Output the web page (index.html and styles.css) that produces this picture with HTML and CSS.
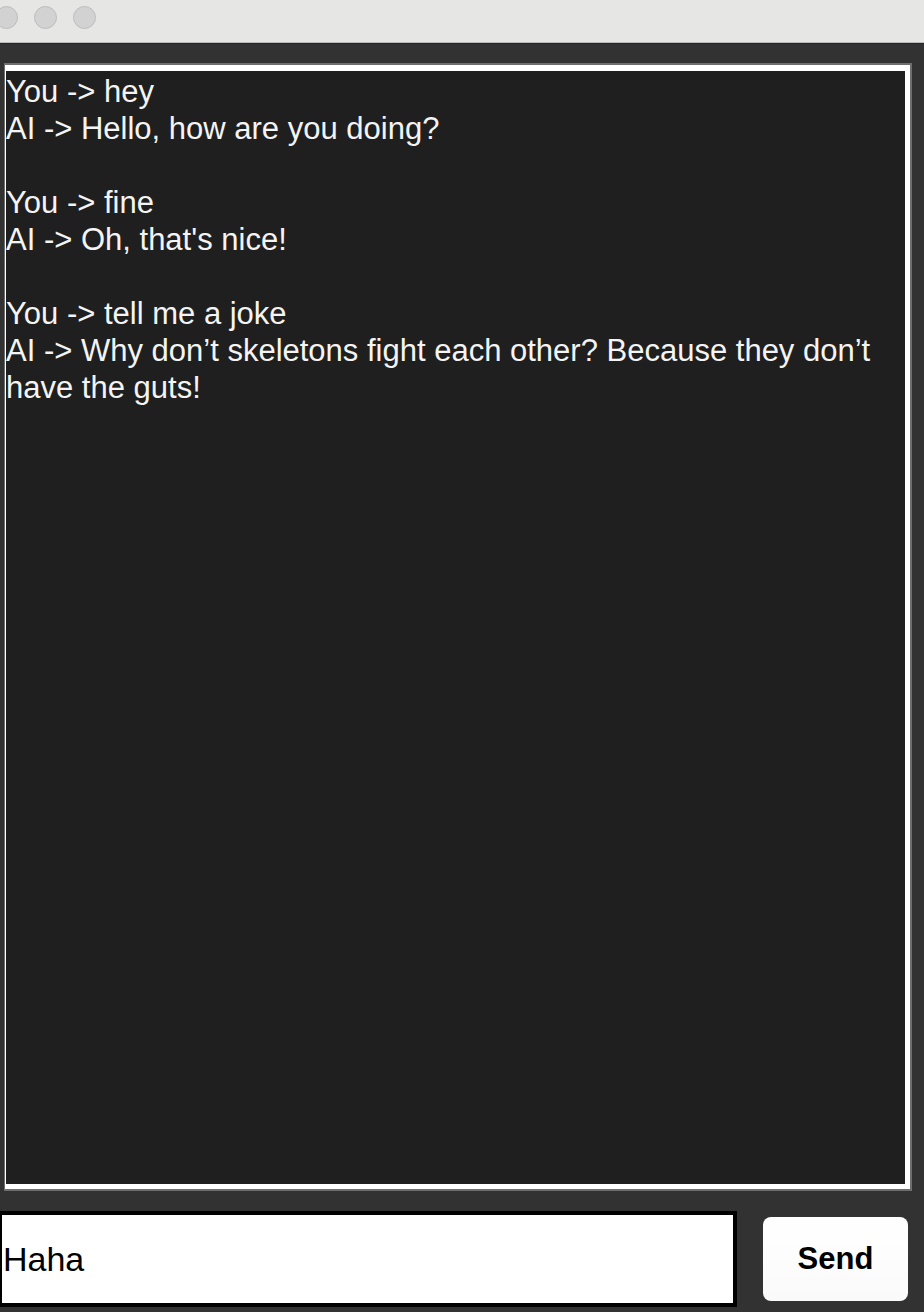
FILE: index.html
```html
<!DOCTYPE html>
<html lang="en">
<head>
<meta charset="utf-8">
<title>Chat</title>
<link rel="stylesheet" href="styles.css">
</head>
<body>
<div class="window">
  <header class="titlebar">
    <span class="light"></span>
    <span class="light"></span>
    <span class="light"></span>
  </header>
  <main class="content">
    <div class="chat-frame">
      <div class="chat-log">
        <div class="exchange">
          <p>You -&gt; hey</p>
          <p>AI -&gt; Hello, how are you doing?</p>
        </div>
        <div class="exchange">
          <p>You -&gt; fine</p>
          <p>AI -&gt; Oh, that's nice!</p>
        </div>
        <div class="exchange">
          <p>You -&gt; tell me a joke</p>
          <p>AI -&gt; Why don’t skeletons fight each other? Because they don’t have the guts!</p>
        </div>
      </div>
    </div>
    <div class="input-row">
      <input class="msg-input" type="text" value="Haha">
      <button class="send-btn" type="button">Send</button>
    </div>
  </main>
</div>
</body>
</html>
```

FILE: styles.css
```css
html, body {
  margin: 0;
  padding: 0;
  background: #323232;
  overflow: hidden;
}

.window {
  width: 924px;
  height: 1312px;
  display: flex;
  flex-direction: column;
  font-family: "Liberation Sans", Arial, sans-serif;
}

.titlebar {
  height: 43px;
  background: #e6e6e4;
  border-bottom: 1px solid #bdbdbd;
  box-shadow: 0 1px 0 #262626;
  display: flex;
  align-items: flex-start;
  gap: 16px;
  padding-top: 6px;
  box-sizing: border-box;
  flex: 0 0 auto;
  margin-bottom: 1px;
}

.light {
  width: 23px;
  height: 23px;
  border-radius: 50%;
  background: #d2d2d2;
  border: 1px solid #bdbdbd;
  box-sizing: border-box;
  flex: 0 0 auto;
}

.light:first-child {
  margin-left: -5px;
}

.content {
  flex: 1 1 auto;
  display: flex;
  flex-direction: column;
  padding: 19px 12px 0 4px;
  background: #323232;
}

.chat-frame {
  height: 1128px;
  box-sizing: border-box;
  border-style: solid;
  border-color: #6e6e6e;
  border-width: 2px 2px 2px 1px;
  background: #ffffff;
  padding: 6px 5px 5px 1px;
}

.chat-log {
  height: 100%;
  background: #1f1f1f;
  color: #f4f4f4;
  font-size: 31px;
  line-height: 37px;
  padding: 2px 2px 0 0;
  box-sizing: border-box;
  overflow: hidden;
}

.exchange {
  margin-bottom: 37px;
}

.exchange p {
  margin: 0;
}

.input-row {
  display: flex;
  align-items: center;
  gap: 26px;
  margin-top: 20px;
  margin-left: -4px;
}

.msg-input {
  width: 737px;
  height: 96px;
  box-sizing: border-box;
  border: 4px solid #000;
  border-left-width: 2px;
  background: #fff;
  color: #000;
  font-family: "Liberation Sans", Arial, sans-serif;
  font-size: 34px;
  padding: 0 1px;
  margin: 0;
  outline: none;
  border-radius: 0;
}

.send-btn {
  width: 145px;
  height: 84px;
  border: none;
  border-radius: 8px;
  background: linear-gradient(#ffffff, #fafafa);
  color: #000;
  font-family: "Liberation Sans", Arial, sans-serif;
  font-weight: bold;
  font-size: 31px;
  padding: 0;
  margin: 0;
}
```
